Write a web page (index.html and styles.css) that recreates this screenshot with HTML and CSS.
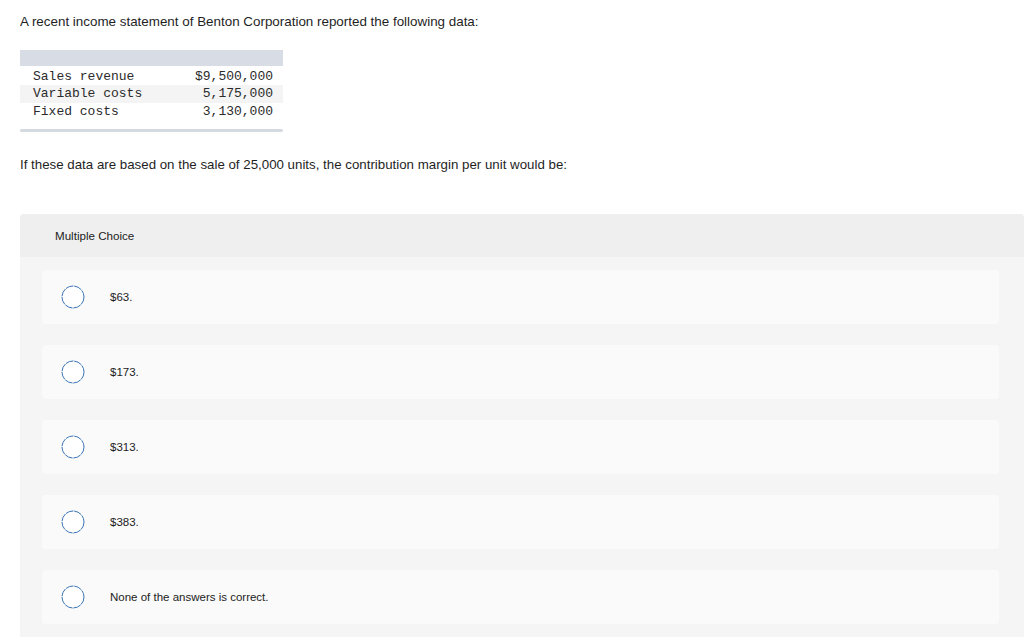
FILE: index.html
```html
<!DOCTYPE html>
<html>
<head>
<meta charset="utf-8">
<link rel="stylesheet" href="styles.css">
</head>
<body>
<div class="page">
  <p class="q-intro">A recent income statement of Benton Corporation reported the following data:</p>
  <div class="data-table">
    <div class="dt-head"></div>
    <div class="dt-row first"><span class="dt-label">Sales revenue</span><span class="dt-val">$9,500,000</span></div>
    <div class="dt-row alt"><span class="dt-label">Variable costs</span><span class="dt-val">5,175,000</span></div>
    <div class="dt-row"><span class="dt-label">Fixed costs</span><span class="dt-val">3,130,000</span></div>
    <div class="dt-foot"></div>
  </div>
  <p class="q-text">If these data are based on the sale of 25,000 units, the contribution margin per unit would be:</p>
  <div class="mc-panel">
    <div class="mc-head">Multiple Choice</div>
    <div class="mc-body">
      <div class="mc-option"><svg class="radio" width="24" height="24" viewBox="0 0 24 24"><circle cx="12" cy="12" r="11" /></svg><span class="mc-label">$63.</span></div>
      <div class="mc-option"><svg class="radio" width="24" height="24" viewBox="0 0 24 24"><circle cx="12" cy="12" r="11" /></svg><span class="mc-label">$173.</span></div>
      <div class="mc-option"><svg class="radio" width="24" height="24" viewBox="0 0 24 24"><circle cx="12" cy="12" r="11" /></svg><span class="mc-label">$313.</span></div>
      <div class="mc-option"><svg class="radio" width="24" height="24" viewBox="0 0 24 24"><circle cx="12" cy="12" r="11" /></svg><span class="mc-label">$383.</span></div>
      <div class="mc-option"><svg class="radio" width="24" height="24" viewBox="0 0 24 24"><circle cx="12" cy="12" r="11" /></svg><span class="mc-label">None of the answers is correct.</span></div>
    </div>
  </div>
</div>
</body>
</html>
```

FILE: styles.css
```css
html, body {
  margin: 0;
  padding: 0;
  background: #ffffff;
}
body {
  font-family: "Liberation Sans", Arial, sans-serif;
  color: #1f1f1f;
  overflow: hidden;
}
.page {
  padding: 14px 0 0 20px;
}
.q-intro {
  margin: 0;
  font-size: 13.4px;
  line-height: 16px;
}
.data-table {
  width: 263px;
  margin-top: 20px;
  font-family: "Liberation Mono", "Courier New", monospace;
  font-size: 13px;
  color: #2b2b2b;
}
.dt-head {
  height: 16px;
  background: #d7dce5;
}
.dt-row {
  display: flex;
  justify-content: space-between;
  height: 17.5px;
  line-height: 17.5px;
  padding: 0 10px 0 13px;
}
.dt-row.first {
  margin-top: 1.5px;
}
.dt-row.alt {
  background: #f4f4f4;
}
.dt-foot {
  margin-top: 8.5px;
  height: 3px;
  border-radius: 2px;
  background: #d5d9e0;
}
.q-text {
  margin: 25px 0 0 0;
  font-size: 13.3px;
  line-height: 16px;
}
.mc-panel {
  margin-top: 41px;
  width: 1004px;
  background: #f5f5f5;
  border-radius: 4px 4px 0 0;
}
.mc-head {
  height: 43px;
  line-height: 43px;
  padding-left: 35px;
  background: #efefef;
  border-radius: 4px 4px 0 0;
  font-size: 11.6px;
  color: #222;
}
.mc-body {
  display: flex;
  flex-direction: column;
  gap: 21px;
  padding: 13px 25px 20px 22px;
}
.mc-option {
  display: flex;
  align-items: center;
  height: 54px;
  padding-left: 19px;
  background: #fafafa;
  border-radius: 4px;
}
.radio {
  flex: none;
}
.radio circle {
  fill: #ffffff;
  stroke: #3a74b5;
  stroke-width: 1;
  stroke-dasharray: 8 0.8;
}
.mc-label {
  margin-left: 25px;
  font-size: 11.5px;
  color: #222;
}
```
